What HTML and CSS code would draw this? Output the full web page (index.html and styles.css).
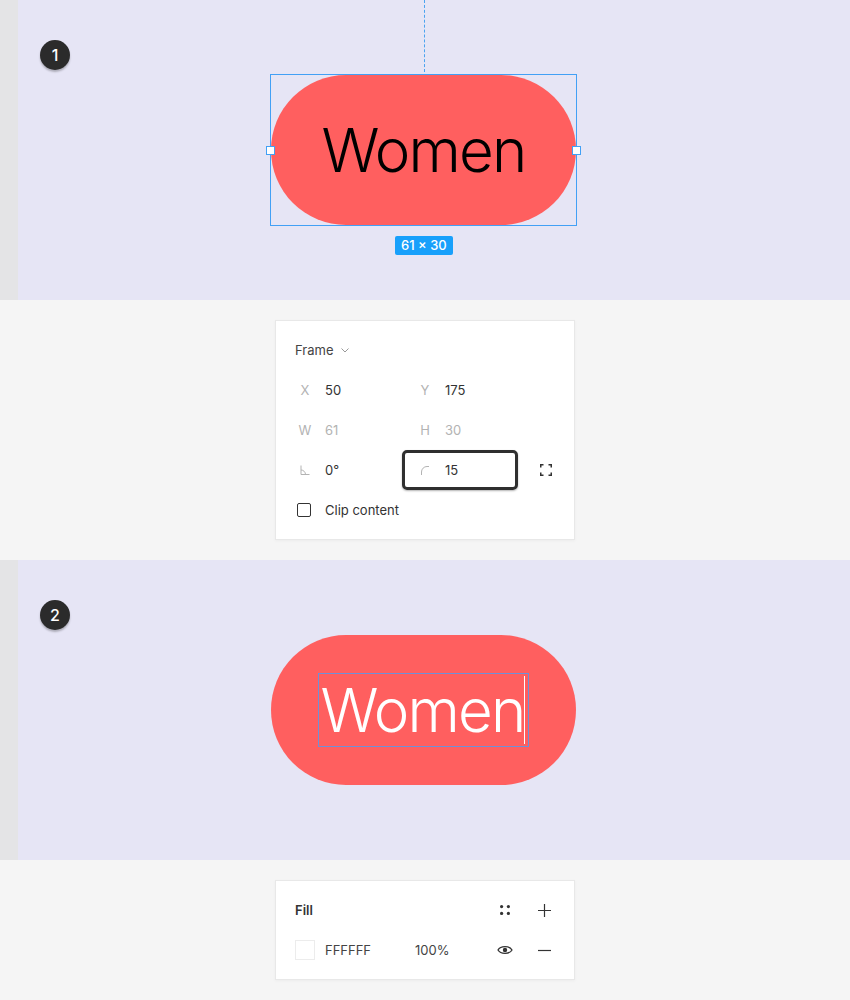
FILE: index.html
```html
<!DOCTYPE html>
<html>
<head>
<meta charset="utf-8">
<link rel="stylesheet" href="styles.css">
</head>
<body>
<section class="canvas">
  <div class="gutter"></div>
  <div class="area">
    <div class="badge">1</div>
    <div class="guide"></div>
    <div class="selection">
      <div class="pill"><span class="label dark">Women</span></div>
      <span class="handle handle-l"></span>
      <span class="handle handle-r"></span>
      <span class="size">61 × 30</span>
    </div>
  </div>
</section>

<section class="tray">
  <div class="panel">
    <div class="row head">
      <span class="title">Frame</span>
      <svg class="chev" width="8" height="5" viewBox="0 0 8 5"><path d="M0.5 0.5 L4 4 L7.5 0.5" fill="none" stroke="#999" stroke-width="1"/></svg>
    </div>
    <div class="row">
      <div class="field"><span class="lbl">X</span><span class="val">50</span></div>
      <div class="field"><span class="lbl">Y</span><span class="val">175</span></div>
    </div>
    <div class="row">
      <div class="field"><span class="lbl">W</span><span class="val muted">61</span></div>
      <div class="field"><span class="lbl">H</span><span class="val muted">30</span></div>
    </div>
    <div class="row">
      <div class="field">
        <span class="lbl"><svg width="10" height="10" viewBox="0 0 10 10"><path d="M1 0.5 V9.5 H9.5" fill="none" stroke="#b3b3b3" stroke-width="1"/><path d="M1 5 A4.5 4.5 0 0 1 5.5 9.5" fill="none" stroke="#b3b3b3" stroke-width="1"/></svg></span>
        <span class="val">0°</span>
      </div>
      <div class="field radius">
        <span class="lbl"><svg width="9" height="9" viewBox="0 0 9 9"><path d="M0.5 9 V6 A5.5 5.5 0 0 1 6 0.5 H8" fill="none" stroke="#b3b3b3" stroke-width="1"/></svg></span>
        <span class="val">15</span>
      </div>
      <svg class="expand" width="12" height="12" viewBox="0 0 12 12"><path d="M0.75 3.5 V0.75 H3.5 M8.5 0.75 H11.25 V3.5 M11.25 8.5 V11.25 H8.5 M3.5 11.25 H0.75 V8.5" fill="none" stroke="#333" stroke-width="1.5"/></svg>
    </div>
    <div class="row">
      <span class="check"></span>
      <span class="val">Clip content</span>
    </div>
  </div>
</section>

<section class="canvas">
  <div class="gutter"></div>
  <div class="area">
    <div class="badge">2</div>
    <div class="selection plain">
      <div class="pill"><span class="label light">Women<span class="caret"></span></span></div>
    </div>
  </div>
</section>

<section class="tray">
  <div class="panel">
    <div class="row">
      <span class="title bold">Fill</span>
      <span class="spacer"></span>
      <span class="cell"><svg width="10" height="10" viewBox="0 0 10 10"><circle cx="1.6" cy="1.6" r="1.6" fill="#333"/><circle cx="8.4" cy="1.6" r="1.6" fill="#333"/><circle cx="1.6" cy="8.4" r="1.6" fill="#333"/><circle cx="8.4" cy="8.4" r="1.6" fill="#333"/></svg></span>
      <span class="cell"><svg width="13" height="13" viewBox="0 0 13 13"><path d="M6.5 0 V13 M0 6.5 H13" stroke="#333" stroke-width="1.2"/></svg></span>
    </div>
    <div class="row">
      <span class="swatch"></span>
      <span class="val hex">FFFFFF</span>
      <span class="val pct">100%</span>
      <span class="spacer"></span>
      <span class="cell"><svg width="16" height="12" viewBox="0 0 16 12"><path d="M1 6 C3.5 1.5 12.5 1.5 15 6 C12.5 10.5 3.5 10.5 1 6 Z" fill="none" stroke="#333" stroke-width="1.3"/><circle cx="8" cy="6" r="2.2" fill="#333"/></svg></span>
      <span class="cell"><svg width="13" height="13" viewBox="0 0 13 13"><path d="M0 6.5 H13" stroke="#333" stroke-width="1.2"/></svg></span>
    </div>
  </div>
</section>
</body>
</html>
```

FILE: styles.css
```css
* { box-sizing: border-box; }
html, body { margin: 0; padding: 0; }
body {
  width: 850px;
  background: #f5f5f5;
  font-family: Inter, "Noto Sans", sans-serif;
  color: #333;
}

.canvas {
  display: flex;
  height: 300px;
}
.gutter {
  width: 18px;
  background: #e4e4e6;
}
.area {
  flex: 1;
  position: relative;
  background: #e6e5f5;
  padding-top: 74px;
  padding-left: 252px;
}

.badge {
  position: absolute;
  left: 22px;
  top: 40px;
  width: 30px;
  height: 30px;
  border-radius: 50%;
  background: #2b2b2b;
  color: #fff;
  font-size: 16px;
  font-weight: 500;
  display: flex;
  align-items: center;
  justify-content: center;
  box-shadow: 0 2px 2px rgba(0,0,0,0.25);
}

.guide {
  position: absolute;
  left: 406px;
  top: 0;
  height: 72px;
  border-left: 1px dashed #4aa3f0;
}

.selection {
  position: relative;
  width: 307px;
  height: 152px;
  border: 1px solid #42a0f5;
}
.selection.plain { border-color: transparent; }

.pill {
  width: 305px;
  height: 150px;
  border-radius: 75px;
  background: #ff5f5f;
  display: flex;
  align-items: center;
  justify-content: center;
}
.label {
  position: relative;
  font-size: 60px;
  font-weight: 300;
  line-height: 72px;
  letter-spacing: -1.8px;
}
.label.dark { color: #000; }
.label.light {
  color: #fff;
  outline: 1.5px solid #6f90d8;
  outline-offset: 0;
  padding: 0 4px 0 2px;
}
.caret {
  position: absolute;
  right: 3px;
  top: 2px;
  bottom: 2px;
  width: 1px;
  background: #fff;
}

.handle {
  position: absolute;
  top: 71px;
  width: 9px;
  height: 9px;
  background: #fff;
  border: 1px solid #42a0f5;
}
.handle-l { left: -5px; }
.handle-r { right: -5px; }

.size {
  position: absolute;
  top: 161px;
  left: 124px;
  height: 19px;
  padding: 0 6px;
  border-radius: 2px;
  background: #18a0fb;
  color: #fff;
  font-size: 13px;
  font-weight: 500;
  line-height: 19px;
  white-space: nowrap;
}

.tray {
  display: flex;
  justify-content: center;
  padding: 20px 0;
}
.panel {
  width: 300px;
  background: #fff;
  border: 1px solid #e8e8e8;
  box-shadow: 0 1px 3px rgba(0,0,0,0.04);
  padding: 9px 19px;
}
.row {
  height: 40px;
  display: flex;
  align-items: center;
  font-size: 13px;
}
.title { color: #444; }
.title.bold { font-weight: 600; color: #333; }
.chev { margin-left: 8px; }

.field {
  width: 120px;
  height: 40px;
  display: flex;
  align-items: center;
}
.lbl {
  width: 20px;
  text-align: center;
  color: #b3b3b3;
  margin-right: 10px;
  display: flex;
  justify-content: center;
  align-items: center;
}
.val { color: #333; }
.val.muted { color: #b3b3b3; }

.field.radius {
  width: 116px;
  margin-left: -13px;
  padding-left: 10px;
  border: 3px solid #2f2f2f;
  border-radius: 5px;
  box-shadow: 0 1px 2px rgba(0,0,0,0.3);
}
.expand { margin-left: 22px; }

.check {
  width: 14px;
  height: 14px;
  margin-left: 2px;
  margin-right: 14px;
  border: 1.5px solid #333;
  border-radius: 2px;
}

.spacer { flex: 1; }
.cell {
  width: 20px;
  height: 20px;
  margin-left: 19px;
  display: flex;
  align-items: center;
  justify-content: center;
}
.cell:last-child { margin-right: 1px; }

.swatch {
  width: 20px;
  height: 20px;
  border: 1px solid #ececec;
  background: #fff;
  margin-right: 10px;
}
.hex { width: 90px; color: #444; }
.pct { color: #444; }
```
